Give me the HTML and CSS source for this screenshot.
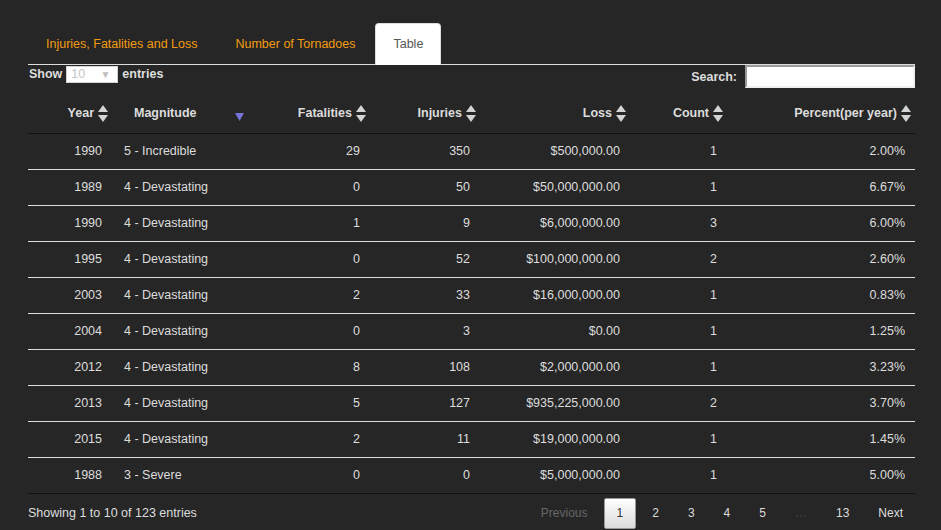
FILE: index.html
```html
<!DOCTYPE html>
<html lang="en">
<head>
<meta charset="utf-8">
<title>Tornado Table</title>
<link rel="stylesheet" href="styles.css">
</head>
<body>
<div class="page">
  <ul class="tabs">
    <li><a>Injuries, Fatalities and Loss</a></li>
    <li><a>Number of Tornadoes</a></li>
    <li class="active"><a>Table</a></li>
  </ul>
  <div class="dt">
    <div class="dt-top">
      <label class="len">Show <span class="sel-wrap"><select class="sel"><option>10</option></select><span class="caret">▼</span></span> entries</label>
      <label class="filter"><span>Search:</span><input type="search" class="search"></label>
    </div>
    <table class="grid">
      <colgroup>
        <col class="c-year"><col class="c-mag"><col class="c-fat"><col class="c-inj"><col class="c-loss"><col class="c-count"><col class="c-pct">
      </colgroup>
      <thead>
        <tr>
          <th class="r">Year<span class="sort"><svg width="10" height="17" viewBox="0 0 10 17"><polygon points="5,0 10,7 0,7"/><polygon points="0,10 10,10 5,17"/></svg></span></th>
          <th class="l">Magnitude<span class="sort desc"><svg width="9" height="8" viewBox="0 0 9 8"><polygon points="0,0 9,0 4.5,8"/></svg></span></th>
          <th class="r">Fatalities<span class="sort"><svg width="10" height="17" viewBox="0 0 10 17"><polygon points="5,0 10,7 0,7"/><polygon points="0,10 10,10 5,17"/></svg></span></th>
          <th class="r">Injuries<span class="sort"><svg width="10" height="17" viewBox="0 0 10 17"><polygon points="5,0 10,7 0,7"/><polygon points="0,10 10,10 5,17"/></svg></span></th>
          <th class="r">Loss<span class="sort"><svg width="10" height="17" viewBox="0 0 10 17"><polygon points="5,0 10,7 0,7"/><polygon points="0,10 10,10 5,17"/></svg></span></th>
          <th class="r">Count<span class="sort"><svg width="10" height="17" viewBox="0 0 10 17"><polygon points="5,0 10,7 0,7"/><polygon points="0,10 10,10 5,17"/></svg></span></th>
          <th class="r">Percent(per year)<span class="sort"><svg width="10" height="17" viewBox="0 0 10 17"><polygon points="5,0 10,7 0,7"/><polygon points="0,10 10,10 5,17"/></svg></span></th>
        </tr>
      </thead>
      <tbody>
        <tr><td class="r">1990</td><td class="l">5 - Incredible</td><td class="r">29</td><td class="r">350</td><td class="r">$500,000.00</td><td class="r">1</td><td class="r">2.00%</td></tr>
        <tr><td class="r">1989</td><td class="l">4 - Devastating</td><td class="r">0</td><td class="r">50</td><td class="r">$50,000,000.00</td><td class="r">1</td><td class="r">6.67%</td></tr>
        <tr><td class="r">1990</td><td class="l">4 - Devastating</td><td class="r">1</td><td class="r">9</td><td class="r">$6,000,000.00</td><td class="r">3</td><td class="r">6.00%</td></tr>
        <tr><td class="r">1995</td><td class="l">4 - Devastating</td><td class="r">0</td><td class="r">52</td><td class="r">$100,000,000.00</td><td class="r">2</td><td class="r">2.60%</td></tr>
        <tr><td class="r">2003</td><td class="l">4 - Devastating</td><td class="r">2</td><td class="r">33</td><td class="r">$16,000,000.00</td><td class="r">1</td><td class="r">0.83%</td></tr>
        <tr><td class="r">2004</td><td class="l">4 - Devastating</td><td class="r">0</td><td class="r">3</td><td class="r">$0.00</td><td class="r">1</td><td class="r">1.25%</td></tr>
        <tr><td class="r">2012</td><td class="l">4 - Devastating</td><td class="r">8</td><td class="r">108</td><td class="r">$2,000,000.00</td><td class="r">1</td><td class="r">3.23%</td></tr>
        <tr><td class="r">2013</td><td class="l">4 - Devastating</td><td class="r">5</td><td class="r">127</td><td class="r">$935,225,000.00</td><td class="r">2</td><td class="r">3.70%</td></tr>
        <tr><td class="r">2015</td><td class="l">4 - Devastating</td><td class="r">2</td><td class="r">11</td><td class="r">$19,000,000.00</td><td class="r">1</td><td class="r">1.45%</td></tr>
        <tr><td class="r">1988</td><td class="l">3 - Severe</td><td class="r">0</td><td class="r">0</td><td class="r">$5,000,000.00</td><td class="r">1</td><td class="r">5.00%</td></tr>
      </tbody>
    </table>
    <div class="dt-bottom">
      <div class="info">Showing 1 to 10 of 123 entries</div>
      <div class="paginate">
        <a class="pbtn disabled">Previous</a>
        <a class="pbtn current">1</a>
        <a class="pbtn">2</a>
        <a class="pbtn">3</a>
        <a class="pbtn">4</a>
        <a class="pbtn">5</a>
        <span class="ellipsis">…</span>
        <a class="pbtn">13</a>
        <a class="pbtn">Next</a>
      </div>
    </div>
  </div>
</div>
</body>
</html>
```
FILE: styles.css
```css
html, body {
  margin: 0;
  padding: 0;
  background: #262626;
  height: 100%;
  overflow: hidden;
}
body {
  font-family: "Liberation Sans", Arial, sans-serif;
  font-size: 12.5px;
  color: #dddddd;
}
.page {
  padding: 23px 26px 0 28px;
}
.tabs {
  list-style: none;
  margin: 0;
  padding: 0;
  display: flex;
  border-bottom: 1px solid #dddddd;
}
.tabs li {
  margin-right: 2px;
  margin-bottom: -1px;
}
.tabs a {
  display: block;
  padding: 10px 17px;
  line-height: 20px;
  border: 1px solid transparent;
  border-radius: 4px 4px 0 0;
  color: #f39c12;
  font-size: 12.5px;
}
.tabs .active a {
  background: #ffffff;
  color: #555555;
  border-color: #dddddd #dddddd transparent;
}
.dt-top {
  display: flex;
  justify-content: space-between;
  align-items: flex-start;
  height: 29px;
}
.len {
  display: flex;
  align-items: center;
  gap: 4px;
  font-weight: bold;
  line-height: 17px;
  padding-left: 1px;
  padding-top: 1px;
}
.sel-wrap {
  position: relative;
  display: block;
  width: 52px;
  height: 17px;
  margin-top: -1px;
}
.sel {
  appearance: none;
  -webkit-appearance: none;
  box-sizing: border-box;
  width: 52px;
  height: 17px;
  margin: 0;
  padding: 0 0 0 4px;
  border: 1px solid #d4d4d4;
  border-radius: 0;
  background: #ffffff;
  color: #c4c4c4;
  font-family: "Liberation Sans", Arial, sans-serif;
  font-size: 12.5px;
  line-height: 15px;
}
.caret {
  position: absolute;
  right: 8px;
  top: 1px;
  font-size: 10px;
  line-height: 15px;
  color: #c0c0c0;
  pointer-events: none;
}
.filter {
  display: flex;
  align-items: center;
  gap: 8px;
  font-weight: bold;
  height: 23px;
}
.search {
  box-sizing: border-box;
  width: 170px;
  height: 23px;
  margin: 0;
  padding: 1px 3px;
  background: #ffffff;
  border: 2px solid;
  border-color: #9a9a9a #efefef #efefef #9a9a9a;
}
.grid {
  width: 887px;
  border-collapse: collapse;
  table-layout: fixed;
  border-bottom: 1px solid #111111;
}
.c-year { width: 84px; }
.c-mag { width: 137px; }
.c-fat { width: 121px; }
.c-inj { width: 110px; }
.c-loss { width: 150px; }
.c-count { width: 97px; }
.c-pct { width: 188px; }
.grid th {
  position: relative;
  padding: 10px 18px;
  line-height: 19px;
  font-weight: bold;
  color: #dcdcdc;
  border-bottom: 1px solid #111111;
  white-space: nowrap;
}
.grid th.l {
  padding-left: 22px;
}
.grid td {
  padding: 8px 10px;
  line-height: 19px;
  color: #dddddd;
  border-top: 1px solid #dddddd;
  white-space: nowrap;
}
.grid td.l {
  padding-left: 12px;
}
.grid tbody tr:first-child td {
  border-top: none;
}
.r { text-align: right; }
.l { text-align: left; }
.sort {
  position: absolute;
  right: 4px;
  top: 11px;
  display: block;
  line-height: 0;
}
.sort svg { fill: #d4d4d4; }
.sort.desc {
  right: 5px;
  top: 19px;
}
.sort.desc svg { fill: #7474d8; }
.dt-bottom {
  display: flex;
  justify-content: space-between;
  align-items: flex-start;
}
.info {
  padding-top: 11px;
  line-height: 17px;
  color: #dddddd;
}
.paginate {
  display: flex;
  gap: 3px;
  padding-top: 4px;
  margin-right: -1px;
  font-size: 12px;
}
.pbtn, .ellipsis {
  box-sizing: border-box;
  display: block;
  padding: 6px 12px;
  line-height: 17px;
  border: 1px solid transparent;
  border-radius: 2px;
  color: #dddddd;
  text-align: center;
  min-width: 18px;
}
.pbtn.disabled { color: #666666; }
.pbtn.current {
  color: #333333;
  border-color: #979797;
  background: linear-gradient(to bottom, #ffffff 0%, #dcdcdc 100%);
}
.ellipsis {
  color: #444444;
}
```
